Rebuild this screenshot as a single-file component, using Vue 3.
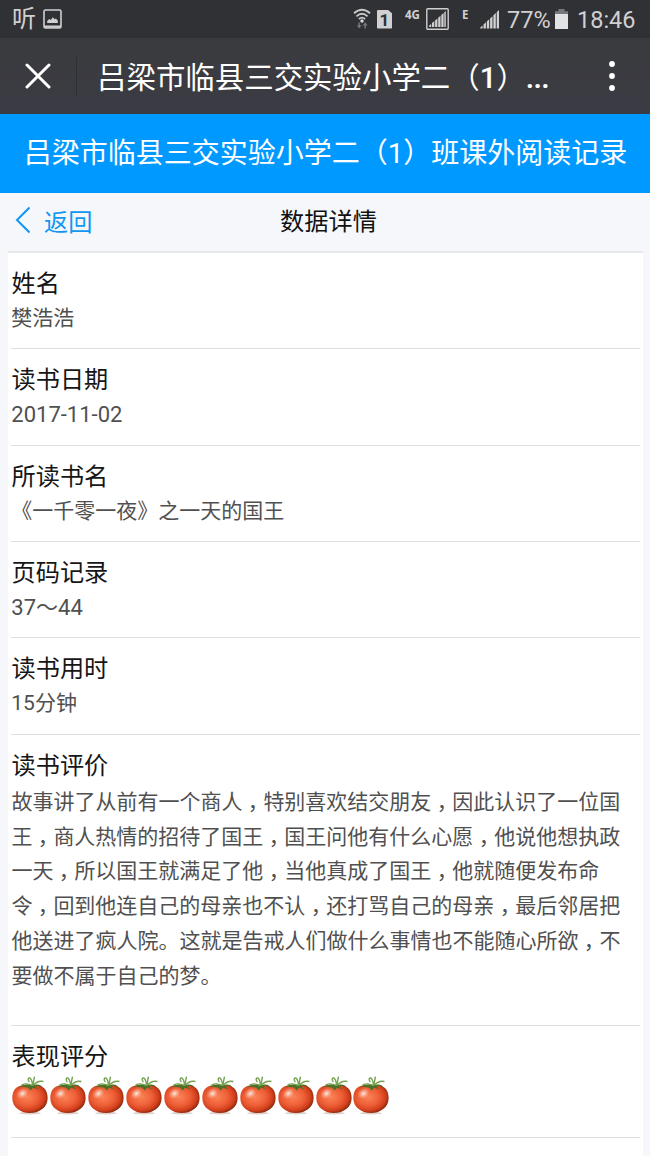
<script setup>
import { ref } from 'vue'

const title = '吕梁市临县三交实验小学二（1）班课外阅读记录'

// Champs simples de la fiche
const fields = ref([
  { label: '姓名', value: '樊浩浩' },
  { label: '读书日期', value: '2017-11-02', latin: true },
  { label: '所读书名', value: '《一千零一夜》之一天的国王' },
  { label: '页码记录', value: '37～44', latin: true },
  { label: '读书用时', value: '15分钟' },
])

const review = [
  '故事讲了从前有一个商人，特别喜欢结交朋友，因此认识了一位国',
  '王，商人热情的招待了国王，国王问他有什么心愿，他说他想执政',
  '一天，所以国王就满足了他，当他真成了国王，他就随便发布命',
  '令，回到他连自己的母亲也不认，还打骂自己的母亲，最后邻居把',
  '他送进了疯人院。这就是告戒人们做什么事情也不能随心所欲，不',
  '要做不属于自己的梦。',
]

const score = ref(10)

// Sépare les virgules pour pouvoir les centrer dans leur cadratin
function parts(line) {
  return line.split(/(，)/)
}
</script>

<template>
  <div class="screen">
    <div class="status-bar">
      <span class="ting">听</span>
      <svg class="picture" width="19" height="20" viewBox="0 0 19 20">
        <rect x="1" y="1" width="17" height="18" rx="1.5" fill="none" stroke="#d0d0d2" stroke-width="1.6" />
        <path d="M1 16.5h17v2.3H1z" fill="#d0d0d2" />
        <path d="M4.2 14v-2l2-2 1.6 1 2-2.8 1.8 2 1.2-.8 2 2.2V14z" fill="#d0d0d2" />
      </svg>
      <span class="spacer"></span>
      <svg class="wifi" width="18" height="22" viewBox="0 0 18 22">
        <g fill="none" stroke="#c8c8ca" stroke-width="1.8">
          <path d="M1 5.2Q9-1.8 17 5.2" />
          <path d="M3.4 8.3Q9 3.2 14.6 8.3" />
          <path d="M5.9 11Q9 8.2 12.1 11" />
        </g>
        <circle cx="9" cy="13" r="1.7" fill="#d8d8da" />
        <path d="M3.8 17.3h1.7v-2.8h1.4v2.8h1.7l-2.4 3.2zM9.6 17.5l2.5-3.2 2.5 3.2h-1.8v3h-1.4v-3z" fill="#77787b" />
      </svg>
      <span class="sim">1</span>
      <span class="net net-4g">4G</span>
      <svg class="signal-box" width="23" height="22" viewBox="0 0 23 22">
        <rect x=".8" y=".8" width="21.4" height="20.4" rx="1" fill="none" stroke="#d0d0d2" stroke-width="1.4" />
        <path d="M3.2 19v-1.5l2-1.5v3zM6 19v-4l2.3-2v6zM9.1 19v-6.5l2.3-2V19zM12.2 19V9.700l2.300-2V19zM15.300 19V7l2.300-2v14zM18.300 19V4.300l1.500-1.300v16z" fill="#d0d0d2" />
      </svg>
      <span class="net net-e">E</span>
      <svg class="signal" width="20" height="20" viewBox="0 0 20 20">
        <path d="M.3 19.500v-1l2.300-2v3zM3.500 19.500v-4l2.400-2.200v6.200zM6.800 19.500v-7l2.400-2.200v9.200zM10.100 19.500V9.500l2.400-2.200v12.200zM13.400 19.500V6.300l2.400-2.200v15.400zM16.700 19.500V3.200L19 1v18.500z" fill="#d0d0d2" />
      </svg>
      <span class="percent">77%</span>
      <svg class="battery" width="13" height="20" viewBox="0 0 13 20">
        <path d="M3.5 0h6v2.2H13V6H0V2.2h3.5z" fill="#77787b" />
        <path d="M0 5h13v15H0z" fill="#e2e2e4" />
      </svg>
      <span class="clock">18:46</span>
    </div>

    <header class="app-bar">
      <button class="close" aria-label="关闭">
        <svg width="26" height="26" viewBox="0 0 26 26">
          <path d="M2 2l22 22M24 2L2 24" stroke="#fff" stroke-width="3" stroke-linecap="round" />
        </svg>
      </button>
      <span class="app-title">吕梁市临县三交实验小学二（<b>1</b>）<span class="dots">...</span></span>
      <button class="more" aria-label="更多">
        <svg width="8" height="32" viewBox="0 0 8 32" fill="#fff">
          <circle cx="4" cy="4" r="2.9" />
          <circle cx="4" cy="16" r="2.9" />
          <circle cx="4" cy="28" r="2.9" />
        </svg>
      </button>
    </header>

    <h1 class="banner">{{ title }}</h1>

    <nav class="sub-nav">
      <a class="back">
        <svg width="16" height="28" viewBox="0 0 16 28">
          <path d="M15.5 1.5L3 14l12.5 12.5" fill="none" stroke="#1197f0" stroke-width="2" />
        </svg>
        <span>返回</span>
      </a>
      <span class="nav-title">数据详情</span>
    </nav>

    <main class="card">
      <section v-for="field in fields" :key="field.label" class="row">
        <div class="label">{{ field.label }}</div>
        <div class="value" :class="{ latin: field.latin }">{{ field.value }}</div>
      </section>

      <section class="row row-review">
        <div class="label">读书评价</div>
        <div class="review">
          <div v-for="(line, i) in review" :key="i" class="line">
            <template v-for="(part, j) in parts(line)" :key="j"><span v-if="part === '，'" class="comma">，</span><template v-else>{{ part }}</template></template>
          </div>
        </div>
      </section>

      <section class="row row-score">
        <div class="label">表现评分</div>
        <div class="tomatoes">
          <svg v-for="n in score" :key="n" class="tomato" viewBox="0 0 38 40">
            <defs>
              <radialGradient :id="`skin${n}`" cx=".42" cy=".42" r=".62">
                <stop offset="0" stop-color="#fb8358" />
                <stop offset=".5" stop-color="#ee5f37" />
                <stop offset=".8" stop-color="#d23f1c" />
                <stop offset="1" stop-color="#80240a" />
              </radialGradient>
              <radialGradient :id="`shine${n}`">
                <stop offset="0" stop-color="#fff" stop-opacity=".85" />
                <stop offset="1" stop-color="#ffd0b8" stop-opacity="0" />
              </radialGradient>
            </defs>
            <ellipse cx="18" cy="37.2" rx="11" ry="1.3" fill="#dccfca" />
            <path d="M18 11C11 7 .3 9.5.3 22 .3 31 8 37 18 37s17.700-6 17.700-15C35.700 9.500 25 7 18 11z" :fill="`url(#skin${n})`" />
            <ellipse cx="10.500" cy="17.500" rx="6.500" ry="5" :fill="`url(#shine${n})`" transform="rotate(-38 10.500 17.500)" />
            <path d="M19.500 8.800C14 7.800 10 8.500 7.500 11.500c4-.6 6.500-.6 8.500.3L19 14.500l2-2.700 5 1.500-2.500-3c3-.5 5.500-.2 7 1.500-1-3-4.500-3.800-7.500-3z" fill="#4d7028" />
            <path d="M20.500 10C20.500 7 20 4 18 2c-2-.5-2.500 2-.5 4M20.800 9.500L22.500.5M21.500 9q4.500-5 10-3.500M20 9.500q-5-3-10.500-.5" fill="none" stroke="#76a14f" stroke-width="1.400" />
          </svg>
        </div>
      </section>
    </main>
  </div>
</template>

<style>
body {
  margin: 0;
  background: #f5f7fb;
}
</style>

<style scoped>
.screen {
  display: flex;
  flex-direction: column;
  width: 650px;
  height: 1156px;
  overflow: hidden;
  background: #f5f7fb;
  font-family: 'Noto Sans CJK SC', sans-serif;
}

.status-bar {
  display: flex;
  flex: none;
  align-items: center;
  height: 38px;
  box-sizing: border-box;
  padding: 0 16px 0 12px;
  background: #303135;
  color: #d0d0d2;
  font-family: Roboto, 'Noto Sans CJK SC', sans-serif;
}
.ting {
  font-size: 24px;
  font-weight: 400;
  line-height: 38px;
}
.picture {
  margin-left: 7px;
}
.spacer {
  flex: 1;
}
.sim {
  width: 15px;
  height: 19px;
  margin-left: 6px;
  border-radius: 1px;
  background: #d0d0d2;
  clip-path: polygon(0 0, 70% 0, 100% 20%, 100% 100%, 0 100%);
  color: #303135;
  font-size: 17px;
  font-weight: 700;
  line-height: 20px;
  text-align: center;
}
.net {
  margin-bottom: 9px;
  font-family: 'Noto Sans', sans-serif;
  font-size: 11.5px;
  font-weight: 700;
  line-height: 14px;
}
.net-4g {
  width: 21px;
  margin-left: 13px;
}
.net-e {
  width: 18px;
  margin-left: 13px;
}
.percent {
  width: 48px;
  margin-left: 7px;
  padding-top: 2px;
  font-size: 23.5px;
  line-height: 38px;
}
.clock {
  width: 57px;
  margin-left: 9px;
  padding-top: 2px;
  font-size: 23.5px;
  line-height: 38px;
}

.app-bar {
  display: flex;
  flex: none;
  align-items: center;
  height: 76px;
  background: linear-gradient(#3a3b3e, #3b3b44);
  color: #fff;
}
.close,
.more {
  display: flex;
  align-items: center;
  justify-content: center;
  padding: 0;
  border: 0;
  background: none;
}
.close {
  box-sizing: border-box;
  width: 77px;
  height: 39px;
  border-right: 1px solid #2f3034;
}
.app-title {
  flex: 1;
  height: 76px;
  padding-left: 20px;
  font-size: 29.45px;
  line-height: 74px;
  white-space: nowrap;
}
.app-title b {
  font-family: Roboto, sans-serif;
  font-weight: 500;
}
.dots {
  font-family: Roboto, sans-serif;
  font-size: 27px;
  font-weight: 700;
}
.more {
  width: 76px;
}

.banner {
  flex: none;
  box-sizing: border-box;
  height: 79px;
  margin: 0;
  padding: 1px 0 0 1px;
  background: #0099ff;
  color: #fff;
  font-family: Roboto, 'Noto Sans CJK SC', sans-serif;
  font-size: 28px;
  font-weight: 400;
  line-height: 77px;
  text-align: center;
  white-space: nowrap;
}

.sub-nav {
  display: grid;
  flex: none;
  grid-template-columns: 1fr auto 1fr;
  align-items: start;
  box-sizing: border-box;
  height: 58px;
  padding: 0 0 0 14px;
  color: #111;
  font-size: 24.2px;
  line-height: 54px;
}
.back {
  display: flex;
  align-items: center;
  gap: 14px;
  height: 54px;
  color: #1197f0;
}
.back span {
  padding-top: 2px;
}
.nav-title {
  margin-right: 7px;
}

.card {
  flex: 1;
  margin: 0 7px 0 8px;
  padding: 0 3px;
  border-top: 2px solid #e6e8eb;
  background: #fff;
}
.row {
  box-sizing: border-box;
  height: 96.35px;
  padding: 11px 0 0;
  border-bottom: 1px solid #dfdfdf;
}
.label {
  padding-left: 0.5px;
  color: #161616;
  font-size: 24.2px;
  line-height: 36px;
}
.value {
  padding-left: 0.3px;
  color: #505050;
  font-family: Roboto, 'Noto Sans CJK SC', sans-serif;
  font-size: 21px;
  line-height: 37px;
}
.value.latin {
  font-size: 22px;
}
.row-review {
  height: 291px;
}
.review {
  padding: 1px 0 0 0.4px;
  color: #505050;
  font-size: 21px;
}
.line {
  height: 34.8px;
  line-height: 34.8px;
  white-space: nowrap;
}
/* virgule demi-chasse, recentrée par les marges */
.comma {
  padding: 0 0.24em 0 0.26em;
  font-feature-settings: 'halt';
}
.row-score {
  height: 112px;
}
.tomatoes {
  display: flex;
  padding: 3px 0 0 1px;
}
.tomato {
  width: 37.95px;
  height: 40px;
}
</style>
